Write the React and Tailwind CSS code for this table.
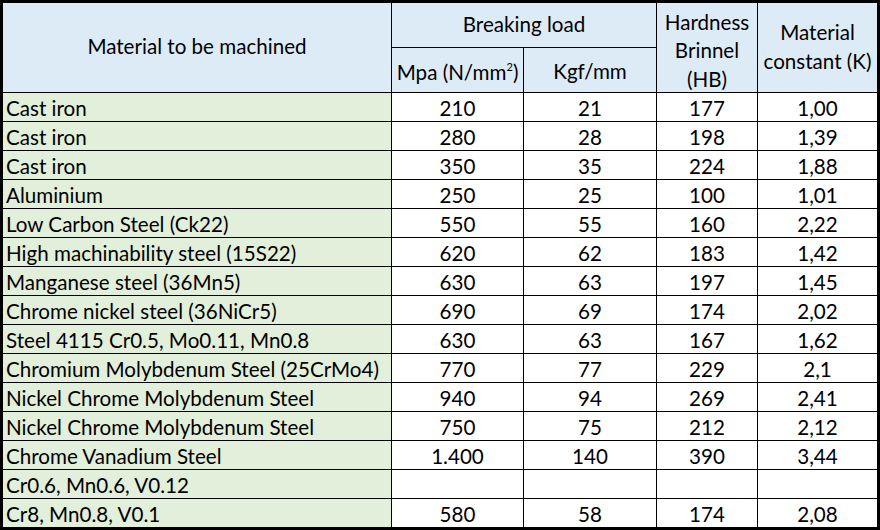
const rows = [
  ["Cast iron", "210", "21", "177", "1,00"],
  ["Cast iron", "280", "28", "198", "1,39"],
  ["Cast iron", "350", "35", "224", "1,88"],
  ["Aluminium", "250", "25", "100", "1,01"],
  ["Low Carbon Steel (Ck22)", "550", "55", "160", "2,22"],
  ["High machinability steel (15S22)", "620", "62", "183", "1,42"],
  ["Manganese steel (36Mn5)", "630", "63", "197", "1,45"],
  ["Chrome nickel steel (36NiCr5)", "690", "69", "174", "2,02"],
  ["Steel 4115 Cr0.5, Mo0.11, Mn0.8", "630", "63", "167", "1,62"],
  ["Chromium Molybdenum Steel (25CrMo4)", "770", "77", "229", "2,1"],
  ["Nickel Chrome Molybdenum Steel", "940", "94", "269", "2,41"],
  ["Nickel Chrome Molybdenum Steel", "750", "75", "212", "2,12"],
  ["Chrome Vanadium Steel", "1.400", "140", "390", "3,44"],
  ["Cr0.6, Mn0.6, V0.12", "", "", "", ""],
  ["Cr8, Mn0.8, V0.1", "580", "58", "174", "2,08"],
];

export default function App() {
  return (
    <div className="w-[880px] h-[530px] bg-white">
      <div className="w-[880px] h-[530px] border-[3px] border-black text-black text-[20.6px] leading-none font-['Lato','Liberation_Sans',sans-serif]">
        <div className="grid grid-cols-[389px_132px_133px_101px_119px] grid-rows-[45px_45px]">
          <div className="row-span-2 border-r border-b border-black bg-[#ddebf7] flex items-center justify-center pb-[2px]">
            Material to be machined
          </div>
          <div className="col-span-2 border-r border-b border-black bg-[#ddebf7] flex items-center justify-center pb-[1px]">
            Breaking load
          </div>
          <div className="row-span-2 border-r border-b border-black bg-[#ddebf7] flex items-center justify-center text-center leading-[28.5px] pt-[6px]">
            Hardness
            <br />
            Brinnel
            <br />
            (HB)
          </div>
          <div className="row-span-2 border-b border-black bg-[#ddebf7] flex items-center justify-center text-center leading-[29px] pb-[1px]">
            Material
            <br />
            constant (K)
          </div>
          <div className="border-r border-b border-black bg-[#ddebf7] flex items-center justify-center pt-[5px]">
            <span>
              Mpa (N/mm<span className="text-[11px] relative -top-[9px]">2</span>)
            </span>
          </div>
          <div className="border-r border-b border-black bg-[#ddebf7] flex items-center justify-center pt-[2px]">
            Kgf/mm
          </div>
        </div>
        {rows.map((r, i) => {
          const last = i === rows.length - 1;
          return (
            <div
              key={i}
              className={
                last
                  ? "grid grid-cols-[389px_132px_133px_101px_119px] h-[28px]"
                  : "grid grid-cols-[389px_132px_133px_101px_119px] h-[29px] border-b border-black"
              }
            >
              <div className="border-r border-black bg-[#e2efda] flex items-center pl-[3px] pt-[3px] whitespace-nowrap">
                {r[0]}
              </div>
              <div className="border-r border-black flex items-center justify-center pt-[3px]">{r[1]}</div>
              <div className="border-r border-black flex items-center justify-center pt-[3px]">{r[2]}</div>
              <div className="border-r border-black flex items-center justify-center pt-[3px]">{r[3]}</div>
              <div className="flex items-center justify-center pt-[3px]">{r[4]}</div>
            </div>
          );
        })}
      </div>
    </div>
  );
}
